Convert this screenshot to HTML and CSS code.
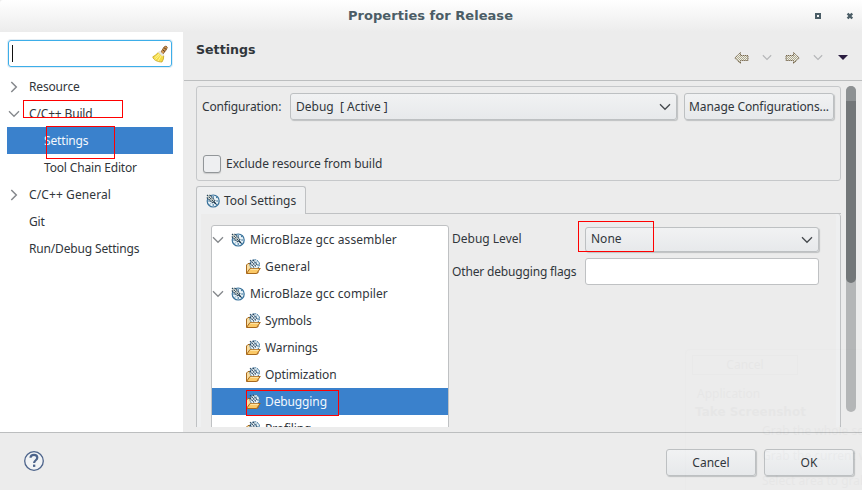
FILE: index.html
```html
<!DOCTYPE html>
<html lang="en">
<head>
<meta charset="utf-8">
<title>Properties for Release</title>
<link rel="stylesheet" href="styles.css">
</head>
<body>
<svg class="defs" width="0" height="0">
  <symbol id="gauge" viewBox="0 0 14 14">
    <circle cx="7.2" cy="7" r="6" fill="#e9f3f8" stroke="#39729b" stroke-width="1.2"/>
    <path d="M7.2 2v2M7.2 10v2M2.2 7h2M10.2 7h2M10 3.2l1 .8M3.8 10.5l1-1M10 10l1 1" stroke="#39729b"/>
    <path d="M.5 1.5L3 .5 9.3 7 9 8.8 7 9 .8 3z" fill="#f3f5e8"/>
    <path d="M1 1l7.5 7.5M3.5.8l5.7 6M.8 3.5l6 5.5" stroke="#254058" stroke-width="1.1" stroke-dasharray="1.7 .6" fill="none"/>
    <path d="M7.5 7.5l2.5 2.5" stroke="#17354e" stroke-width="1.5"/>
  </symbol>
  <symbol id="folder" viewBox="0 0 16 16">
    <path d="M1.5 14V6l1.5-1.5h3L7.5 6H13v8z" fill="#f8dda0" stroke="#a8691d"/>
    <circle cx="9.7" cy="5.5" r="4.8" fill="#e9f3f8" stroke="#39729b" stroke-dasharray="2 .7"/>
    <path d="M5 1l6 6.5M8 .8l4 5M5 4l4 4.5" stroke="#254058" stroke-width="1.1" stroke-dasharray="1.7 .6"/>
    <path d="M10 4.5l2-2M12 6h2" stroke="#39729b"/>
    <path d="M1.5 14.5L5 9.5h10.3l-3.8 5z" fill="#fbc967" stroke="#a8691d"/>
    <path d="M5.4 10.3h8" stroke="#ffecb5"/>
  </symbol>
  <symbol id="down" viewBox="0 0 12 8"><path d="M1 1.3l5 5 5-5" fill="none" stroke="currentColor" stroke-width="1.3"/></symbol>
  <symbol id="right" viewBox="0 0 8 12"><path d="M1.3 1l5 5-5 5" fill="none" stroke="currentColor" stroke-width="1.5"/></symbol>
  <pattern id="dither" width="2" height="2" patternUnits="userSpaceOnUse"><rect width="2" height="2" fill="#f3f0e2"/><path d="M0 0h1v1H0zM1 1h1v1H1z" fill="#aaa794"/></pattern>
  <symbol id="arrow" viewBox="0 0 15 12">
    <path d="M.8 6L6.5.5V3.5H14v5H6.5v3z" fill="url(#dither)" stroke="#75664c" stroke-dasharray="1.3 .6"/>
  </symbol>
</svg>
<div class="window">
  <header class="titlebar">
    <h1>Properties for Release</h1>
    <svg class="wincontrols" width="40" height="8" viewBox="0 0 40 8">
      <rect x="2" y="2" width="4" height="4" fill="none" stroke="#4b5d66" stroke-width="2"/>
      <path d="M33.6 1.5l4.6 5M38.2 1.5l-4.6 5" stroke="#4b5d66" stroke-width="2.4"/>
    </svg>
  </header>
  <div class="body">
    <nav class="sidebar">
      <div class="search"><i class="caret"></i>
        <svg width="16" height="18" viewBox="0 0 16 18">
          <path d="M9 7l3-5 2-1 1.3 1.2-.8 2.3L11 9z" fill="#d49a50" stroke="#805026" stroke-width=".8"/>
          <path d="M11 5l2 1.6M12.2 3l2 1.4" stroke="#51331f"/>
          <path d="M6.3 7.3Q4 10.5.8 11.8c.3 3 4.7 5.2 9.2 5.2q2-3 1.7-6.2z" fill="#f4dc45" stroke="#c7a31f" stroke-width=".8"/>
          <path d="M3.5 14.5L8 9.5M6 16l3.5-5.8M2.5 13l4.5-4" stroke="#fff394"/>
          <path d="M6.7 6.7l4.8 4" stroke="#e8e5dd" stroke-width="2.3"/>
        </svg>
      </div>
      <div class="tree">
        <div class="row"><svg class="exp" width="8" height="12"><use href="#right"/></svg><span class="t1">Resource</span></div>
        <div class="row"><svg class="exp open" width="12" height="8"><use href="#down"/></svg><span class="t1 cut">C/C++ Build</span></div>
        <div class="row sel"><span class="t2">Settings</span></div>
        <div class="row"><span class="t2">Tool Chain Editor</span></div>
        <div class="row"><svg class="exp" width="8" height="12"><use href="#right"/></svg><span class="t1 wide">C/C++ General</span></div>
        <div class="row"><span class="t1">Git</span></div>
        <div class="row"><span class="t1">Run/Debug Settings</span></div>
      </div>
    </nav>
    <main>
      <div class="head">
        <h2>Settings</h2>
        <div class="history">
          <svg width="15" height="12"><use href="#arrow"/></svg>
          <svg class="dim" width="10" height="7"><use href="#down"/></svg>
          <svg class="flip" width="15" height="12"><use href="#arrow"/></svg>
          <svg class="dim" width="10" height="7"><use href="#down"/></svg>
          <svg width="10" height="5"><path d="M0 0h10L5 5z" fill="#2b1d40"/></svg>
        </div>
      </div>
      <div class="content">
        <div class="scrollarea">
          <section class="config">
            <div class="line">
              <label>Configuration:</label>
              <div class="combo big"><span>Debug&nbsp; [ Active ]</span><svg width="12" height="8"><use href="#down"/></svg></div>
              <button class="btn manage">Manage Configurations...</button>
            </div>
            <div class="exclude"><i class="check"></i><span>Exclude resource from build</span></div>
          </section>
          <div class="tabs"><div class="tab"><svg width="14" height="14"><use href="#gauge"/></svg><span>Tool Settings</span></div><div class="tabrest"></div></div>
          <section class="panel">
            <div class="tools">
              <div class="row"><svg class="tw" width="12" height="8"><use href="#down"/></svg><svg class="g" width="14" height="14"><use href="#gauge"/></svg><span>MicroBlaze gcc assembler</span></div>
              <div class="row leaf"><svg width="16" height="16"><use href="#folder"/></svg><span class="wide">General</span></div>
              <div class="row"><svg class="tw" width="12" height="8"><use href="#down"/></svg><svg class="g" width="14" height="14"><use href="#gauge"/></svg><span>MicroBlaze gcc compiler</span></div>
              <div class="row leaf"><svg width="16" height="16"><use href="#folder"/></svg><span>Symbols</span></div>
              <div class="row leaf"><svg width="16" height="16"><use href="#folder"/></svg><span>Warnings</span></div>
              <div class="row leaf"><svg width="16" height="16"><use href="#folder"/></svg><span>Optimization</span></div>
              <div class="row leaf sel"><svg width="16" height="16"><use href="#folder"/></svg><span>Debugging</span></div>
              <div class="row leaf"><svg width="16" height="16"><use href="#folder"/></svg><span>Profiling</span></div>
            </div>
            <div class="form">
              <label>Debug Level</label>
              <div class="combo level"><span>None</span><svg width="12" height="8"><use href="#down"/></svg></div>
              <label class="flags">Other debugging flags</label>
              <div class="input"></div>
            </div>
          </section>
        </div>
        <div class="track"><div class="thumb"></div></div>
      </div>
    </main>
  </div>
  <footer>
    <svg width="22" height="22" viewBox="0 0 22 22"><circle cx="11" cy="11" r="9.3" fill="#f1f3f5" stroke="#4d648b" stroke-width="1.3"/><path d="M7.5 7.8C7.7 3.9 14.3 4 14.3 7.7c0 2.6-3.2 2.5-3.2 5.2" fill="none" stroke="#4d648b" stroke-width="2.2"/><rect x="10" y="14.6" width="2.3" height="2.3" fill="#4d648b"/></svg>
    <div class="actions"><button class="btn">Cancel</button><button class="btn">OK</button></div>
  </footer>
  <i class="mark m1"></i><i class="mark m2"></i><i class="mark m3"></i><i class="mark m4"></i>
  <div class="ghost">
    <span class="gbtn">Cancel</span>
    <span class="gapp">Application</span>
    <b>Take Screenshot</b>
    <span class="gopt">Grab the whole screen</span>
    <span class="gopt">Grab the current window</span>
    <span class="gopt">Select area to grab</span>
  </div>
</div>
</body>
</html>
```
FILE: styles.css
```css
* { box-sizing: border-box; }
body { margin: 0; font: 12px/18px "Noto Sans", sans-serif; color: #31363b; }
svg { display: block; flex: none; }
.defs { position: absolute; }
.window { position: relative; width: 862px; height: 490px; overflow: hidden; background: #ececec; display: flex; flex-direction: column; }
.window span, .window label, .btn { white-space: nowrap; }
.titlebar { height: 32px; flex: none; display: flex; align-items: center; background: linear-gradient(#fff, #ececec); border-top-left-radius: 3px; }
h1 { margin: 0 0 0 348px; width: 460px; font: bold 13px/18px "DejaVu Sans", sans-serif; letter-spacing: .04px; color: #4b5d66; }
.wincontrols { margin-left: 6px; }
.body { height: 400px; display: flex; flex: none; }
.sidebar { width: 183px; background: #fff; flex: none; padding-top: 8px; }
.search { margin-left: 8px; width: 164px; height: 27px; border: 1px solid #3daee9; border-radius: 3px; box-shadow: 0 0 0 1px #e3edf4; display: flex; align-items: center; justify-content: space-between; padding: 0 3px 0 3px; }
.caret { width: 1px; height: 17px; background: #111; }
.tree { margin: 6px 0 0 7px; width: 166px; letter-spacing: -.16px; }
.tree .wide { letter-spacing: .1px; }
.leaf .wide { letter-spacing: .15px; }
.row { height: 27px; display: flex; align-items: center; color: #31363b; }
.row svg { color: #85888c; }
.row.sel { background: #3a81cc; }
.row.sel span { color: #f4f8fc; }
.exp { margin: 0 12px 0 3px; }
.exp.open { margin: 0 9px 0 1px; }
.t1:first-child { margin-left: 22px; }
.exp + .t1 { margin-left: -1px; }
.exp.open + .t1 { margin-left: 0; }
.t2 { margin-left: 37px; }
.cut { height: 13px; line-height: 18px; overflow: hidden; margin-top: -5px; }
main { flex: 1; margin-left: 1px; }
.head { height: 49px; border-bottom: 1px solid #bcbebf; padding: 9px 14px 0 12px; display: flex; justify-content: space-between; }
h2 { margin: 0; font: bold 12.6px/18px "DejaVu Sans", sans-serif; }
.history { height: 33px; display: flex; align-items: center; gap: 13px; }
.history svg:last-child { margin-left: 2px; }
.flip { transform: scaleX(-1); }
.dim { color: #b5b6b8; }
.content { height: 351px; padding: 5px 6px 0 12px; display: flex; }
.scrollarea { width: 645px; height: 341px; overflow: hidden; }
.config { height: 95px; border: 1px solid #c6c8ca; border-radius: 3px; padding: 6px 6px 0 5px; }
.line { display: flex; align-items: center; }
.line label { width: 88px; letter-spacing: -.13px; }
.combo, .btn { border: 1px solid #bdc0c2; border-radius: 3px; background: linear-gradient(#f1f2f3, #e7e9eb); box-shadow: 1px 1px 1px #bfc1c2; color: #31363b; }
.combo { display: flex; align-items: center; justify-content: space-between; padding: 0 6px 0 5px; }
.combo svg { stroke-width: 1; margin-top: 1px; color: #45494d; }
.big { width: 387px; height: 27px; }
.big svg { margin-right: -1px; }
.level svg { margin-right: -1px; }
.btn { font: 12px/18px "Noto Sans", sans-serif; height: 27px; padding: 0; text-align: center; }
.manage { width: 150px; margin-left: 7px; letter-spacing: -.1px; }
.exclude { display: flex; align-items: center; gap: 5px; height: 18px; margin-top: 35px; letter-spacing: -.04px; }
.check { width: 18px; height: 18px; margin-left: 1px; border: 1px solid #929699; border-radius: 3px; background: #eeeff1; box-shadow: 0 1px 1px #ccc; }
.tabs { margin-top: 5px; height: 28px; display: flex; }
.tab { width: 110px; border: 1px solid #bfc1c3; border-bottom: 0; border-radius: 3px 3px 0 0; background: #eff0f1; display: flex; align-items: center; gap: 4px; padding-left: 9px; }
.tabrest { flex: 1; border-bottom: 1px solid #bfc1c3; }
.panel { height: 230px; border: 1px solid #bfc1c3; border-top: 0; border-top-right-radius: 3px; display: flex; padding: 11px 0 0 14px; box-shadow: inset 4px 0 0 #eff0f1, inset -4px 0 0 #eeeff0; }
.tools { width: 238px; height: 300px; flex: none; background: #fff; border: 1px solid #bfc1c3; border-radius: 3px 3px 0 0; }
.tw { margin: 0 7px 0 0; }
.g { margin-right: 5px; }
.g + span { letter-spacing: .06px; }
.leaf { padding-left: 33px; gap: 4px; letter-spacing: -.12px; }
.form { display: grid; grid-template-columns: 133px 234px; grid-template-rows: 26px 27px; row-gap: 6px; align-content: start; align-items: center; margin: 1px 0 0 3px; }
.flags { letter-spacing: -.16px; }
.level { height: 25px; }
.input { height: 27px; background: #fff; border: 1px solid #bfc1c3; border-radius: 3px; }
.track { width: 10px; height: 326px; margin-left: 5px; border-radius: 5px; background: #b4b6b7; overflow: hidden; }
.thumb { height: 197px; background: #737779; border-radius: 0 0 5px 5px; border-top: 15px solid #8d9193; }
footer { flex: 1; border-top: 1px solid #bcbebf; display: flex; justify-content: space-between; padding: 17px 8px 0 23px; }
.actions { display: flex; gap: 8px; margin-top: -1px; }
.actions .btn { width: 90px; }
.mark { position: absolute; border: 1px solid #f00; }
.m1 { left: 23px; top: 100px; width: 100px; height: 18px; }
.m2 { left: 46px; top: 126px; width: 69px; height: 33px; }
.m3 { left: 246px; top: 390px; width: 93px; height: 26px; }
.m4 { left: 578px; top: 221px; width: 76px; height: 31px; }
.ghost { position: absolute; left: 685px; top: 349px; width: 177px; height: 141px; overflow: hidden; border: 1px solid #0005; border-width: 1px 0 0 1px; border-radius: 5px 0 0; opacity: .018; font-size: 12px; pointer-events: none; padding: 5px 0 0 6px; display: flex; flex-direction: column; color: #000; }
.gbtn { width: 106px; height: 20px; border: 1px solid #0006; text-align: center; }
.gapp { margin: 10px 0 0 5px; }
.ghost b { font: bold 12px/18px "DejaVu Sans", sans-serif; margin-left: 3px; }
.gopt { margin: 1px 0 6px 70px; }
```
